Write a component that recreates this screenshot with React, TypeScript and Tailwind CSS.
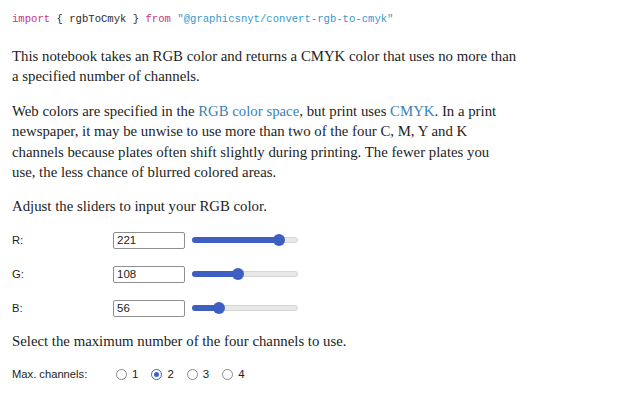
import React from 'react';

const serif = { fontFamily: '"Liberation Serif", serif' };

const Slider = ({ value }: { value: number }) => {
  // thumb travel inside a 106px track with a 12px thumb
  const pos = 6 + 94 * (value / 255);
  return (
    <div className="relative h-[12px] w-[106px] flex items-center">
      <div className="h-[6px] w-full rounded-full bg-[#e8e8e8] border border-[#d4d4d4]" />
      <div className="absolute left-0 h-[6px] rounded-full bg-[#3d5fc2]" style={{ width: pos }} />
      <div className="absolute top-0 h-[12px] w-[12px] rounded-full bg-[#3d5fc2]" style={{ left: pos - 6 }} />
    </div>
  );
};

const ColorRow = ({ label, value }: { label: string; value: number }) => (
  <div className="flex items-center h-[17px]">
    <div className="w-[101px] text-[11.2px] text-[#1b1e23]">{label}</div>
    <div className="w-[72px] h-[17px] border border-[#8f8f8f] rounded-[2px] bg-white flex items-center pl-[3px] text-[11.5px] text-[#1b1e23]">
      {value}
    </div>
    <div className="ml-[7px]">
      <Slider value={value} />
    </div>
  </div>
);

const Radio = ({ n, checked }: { n: number; checked?: boolean }) => (
  <div className="flex items-center gap-[5px]">
    {checked ? (
      <div className="w-[11px] h-[11px] rounded-full border-[1.5px] border-[#3d63c8] bg-white flex items-center justify-center">
        <div className="w-[5px] h-[5px] rounded-full bg-[#3d63c8]" />
      </div>
    ) : (
      <div className="w-[11px] h-[11px] rounded-full border border-[#8a8a8a] bg-white" />
    )}
    <span className="text-[11.5px] text-[#1b1e23]">{n}</span>
  </div>
);

export default function App() {
  return (
    <div className="w-[640px] h-[400px] bg-white overflow-hidden px-[12px] text-[#1b1e23]" style={{ fontFamily: '"Liberation Sans", Arial, sans-serif' }}>
      {/* import cell */}
      <div className="mt-[11px] h-[16px] leading-[16px] text-[10.6px] whitespace-nowrap" style={{ fontFamily: '"Liberation Mono", monospace' }}>
        <span className="text-[#c93584]">import</span>
        <span className="text-[#2b2b2b]">{' { rgbToCmyk } '}</span>
        <span className="text-[#c93584]">from</span>{' '}
        <span className="text-[#3a98cc]">"@graphicsnyt/convert-rgb-to-cmyk"</span>
      </div>

      <p className="mt-[19px] text-[14.8px] leading-[20.4px] whitespace-nowrap" style={serif}>
        This notebook takes an RGB color and returns a CMYK color that uses no more than
        <br />a specified number of channels.
      </p>

      <p className="mt-[14px] text-[14.8px] leading-[20.4px] whitespace-nowrap" style={serif}>
        Web colors are specified in the <span className="text-[#3a7fb4]">RGB color space</span>, but print uses{' '}
        <span className="text-[#3a7fb4]">CMYK</span>. In a print
        <br />newspaper, it may be unwise to use more than two of the four C, M, Y and K
        <br />channels because plates often shift slightly during printing. The fewer plates you
        <br />use, the less chance of blurred colored areas.
      </p>

      <p className="mt-[14px] text-[14.8px] leading-[20.4px] whitespace-nowrap" style={serif}>
        Adjust the sliders to input your RGB color.
      </p>

      <div className="mt-[15px] flex flex-col gap-[17px]">
        <ColorRow label="R:" value={221} />
        <ColorRow label="G:" value={108} />
        <ColorRow label="B:" value={56} />
      </div>

      <p className="mt-[14px] text-[14.8px] leading-[20.4px] whitespace-nowrap" style={serif}>
        Select the maximum number of the four channels to use.
      </p>

      <div className="mt-[15px] flex items-center h-[17px]">
        <div className="w-[104px] text-[11.2px]">Max. channels:</div>
        <div className="flex items-center gap-[13px]">
          <Radio n={1} />
          <Radio n={2} checked />
          <Radio n={3} />
          <Radio n={4} />
        </div>
      </div>
    </div>
  );
}
